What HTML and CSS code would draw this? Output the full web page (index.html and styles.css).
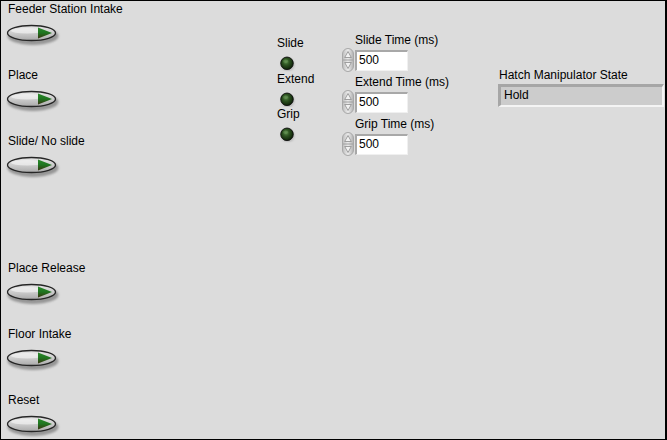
FILE: index.html
```html
<!DOCTYPE html>
<html>
<head>
<meta charset="utf-8">
<link rel="stylesheet" href="styles.css">
</head>
<body>
<svg width="0" height="0" class="defs">
  <defs>
    <linearGradient id="btnFill" x1="0" y1="0" x2="0" y2="1">
      <stop offset="0" stop-color="#e8e8e8"/>
      <stop offset="0.5" stop-color="#cdcdcd"/>
      <stop offset="1" stop-color="#a9a9a9"/>
    </linearGradient>
    <linearGradient id="triFill" x1="0" y1="0" x2="0" y2="1">
      <stop offset="0" stop-color="#2a8a2a"/>
      <stop offset="0.5" stop-color="#1f7420"/>
      <stop offset="1" stop-color="#3a3410"/>
    </linearGradient>
    <linearGradient id="spinFill" x1="0" y1="0" x2="1" y2="0">
      <stop offset="0" stop-color="#bcbcbc"/>
      <stop offset="0.5" stop-color="#ececec"/>
      <stop offset="1" stop-color="#b0b0b0"/>
    </linearGradient>
    <radialGradient id="ledFill" cx="0.42" cy="0.38" r="0.6">
      <stop offset="0" stop-color="#5a8a4a"/>
      <stop offset="0.45" stop-color="#2c5220"/>
      <stop offset="1" stop-color="#10240a"/>
    </radialGradient>
    <filter id="blur" x="-20%" y="-40%" width="140%" height="180%">
      <feGaussianBlur stdDeviation="1.3"/>
    </filter>
    <symbol id="btn" viewBox="0 0 56 24">
      <ellipse cx="27" cy="12" rx="25.5" ry="9" fill="#969696" filter="url(#blur)"/>
      <ellipse cx="25.5" cy="9" rx="24" ry="7.5" fill="url(#btnFill)" stroke="#262626" stroke-width="1.3"/>
      <ellipse cx="21" cy="6.8" rx="16" ry="2.8" fill="#f6f6f6" opacity="0.6"/>
      <polygon points="32,3.5 46,9 32,14.5" fill="url(#triFill)"/>
    </symbol>
    <symbol id="led" viewBox="0 0 18 18">
      <circle cx="10" cy="10" r="7.5" fill="#b4b4b4" filter="url(#blur)"/>
      <circle cx="9" cy="8.5" r="7.3" fill="url(#ledFill)" stroke="#0c0c0c" stroke-width="1"/>
      <ellipse cx="7.5" cy="6" rx="3" ry="2" fill="#7aa86a" opacity="0.35"/>
    </symbol>
    <symbol id="spin" viewBox="0 0 12 24">
      <rect x="0.5" y="0.5" width="11" height="23" rx="5.5" fill="url(#spinFill)" stroke="#a8a8a8"/>
      <line x1="1" y1="12" x2="11" y2="12" stroke="#a0a0a0"/>
      <polygon points="6,3.5 9.3,9.5 2.7,9.5" fill="#f2f2f2" stroke="#8c8c8c" stroke-width="0.8"/>
      <polygon points="6,20.5 9.3,14.5 2.7,14.5" fill="#f2f2f2" stroke="#8c8c8c" stroke-width="0.8"/>
    </symbol>
  </defs>
</svg>
<div class="panel">
  <div class="col-buttons">
    <div class="btn-group">
      <div class="label">Feeder Station Intake</div>
      <svg class="bool-btn"><use href="#btn"/></svg>
    </div>
    <div class="btn-group">
      <div class="label">Place</div>
      <svg class="bool-btn"><use href="#btn"/></svg>
    </div>
    <div class="btn-group">
      <div class="label">Slide/ No slide</div>
      <svg class="bool-btn"><use href="#btn"/></svg>
    </div>
    <div class="btn-group lower">
      <div class="label">Place Release</div>
      <svg class="bool-btn"><use href="#btn"/></svg>
    </div>
    <div class="btn-group">
      <div class="label">Floor Intake</div>
      <svg class="bool-btn"><use href="#btn"/></svg>
    </div>
    <div class="btn-group">
      <div class="label">Reset</div>
      <svg class="bool-btn"><use href="#btn"/></svg>
    </div>
  </div>

  <div class="col-leds">
    <div class="led-group">
      <div class="label">Slide</div>
      <svg class="led"><use href="#led"/></svg>
    </div>
    <div class="led-group">
      <div class="label">Extend</div>
      <svg class="led"><use href="#led"/></svg>
    </div>
    <div class="led-group">
      <div class="label">Grip</div>
      <svg class="led"><use href="#led"/></svg>
    </div>
  </div>

  <div class="col-nums">
    <div class="num-group">
      <div class="label num-label">Slide Time (ms)</div>
      <div class="numeric">
        <svg class="spin"><use href="#spin"/></svg>
        <div class="num-box">500</div>
      </div>
    </div>
    <div class="num-group">
      <div class="label num-label">Extend Time (ms)</div>
      <div class="numeric">
        <svg class="spin"><use href="#spin"/></svg>
        <div class="num-box">500</div>
      </div>
    </div>
    <div class="num-group">
      <div class="label num-label">Grip Time (ms)</div>
      <div class="numeric">
        <svg class="spin"><use href="#spin"/></svg>
        <div class="num-box">500</div>
      </div>
    </div>
  </div>

  <div class="col-state">
    <div class="label">Hatch Manipulator State</div>
    <div class="str-ind">Hold</div>
  </div>
</div>
</body>
</html>
```

FILE: styles.css
```css
* { box-sizing: border-box; }
html, body { margin: 0; padding: 0; }
body {
  width: 667px;
  height: 440px;
  background: #dcdcdc;
  font-family: "Liberation Sans", Arial, sans-serif;
  font-size: 12px;
  color: #000;
  overflow: hidden;
}
.defs { position: absolute; width: 0; height: 0; }
.panel {
  width: 667px;
  height: 440px;
  border: 1px solid #000;
  border-right-width: 2px;
  background: #dcdcdc;
  display: flex;
  align-items: flex-start;
}
.label {
  height: 14px;
  line-height: 14px;
  white-space: nowrap;
}
.col-buttons {
  width: 276px;
  padding-left: 6px;
  padding-top: 1px;
  display: flex;
  flex-direction: column;
}
.btn-group {
  height: 66px;
  display: flex;
  flex-direction: column;
  align-items: flex-start;
}
.btn-group .label { margin-left: 1px; }
.btn-group.lower { margin-top: 61px; }
.bool-btn {
  width: 56px;
  height: 24px;
  margin-top: 8px;
  margin-left: -1px;
}
.col-leds {
  width: 64px;
  padding-top: 35px;
  display: flex;
  flex-direction: column;
}
.led-group {
  height: 35.5px;
  display: flex;
  flex-direction: column;
}
.led {
  width: 18px;
  height: 18px;
  margin-top: 6px;
  margin-left: 1px;
}
.col-nums {
  width: 157px;
  padding-top: 32px;
  display: flex;
  flex-direction: column;
}
.num-group {
  height: 42px;
  display: flex;
  flex-direction: column;
}
.num-label { margin-left: 14px; }
.numeric {
  margin-top: 3px;
  display: flex;
  align-items: center;
  height: 20px;
}
.spin {
  width: 12px;
  height: 24px;
  margin-left: 1px;
}
.num-box {
  width: 53px;
  height: 21px;
  margin-left: 1px;
  background: #fff;
  border-top: 2px solid #a8a8a8;
  border-left: 2px solid #a8a8a8;
  border-right: 1px solid #f0f0f0;
  border-bottom: 1px solid #f0f0f0;
  padding-left: 2px;
  line-height: 17px;
}
.col-state {
  width: 166px;
  padding-top: 67px;
  display: flex;
  flex-direction: column;
}
.col-state .label { margin-left: 1px; }
.str-ind {
  margin-top: 2px;
  width: 166px;
  height: 23px;
  background: #cccccc;
  border-top: 3px solid #a6a6a6;
  border-left: 3px solid #a6a6a6;
  border-right: 2px solid #f4f4f4;
  border-bottom: 2px solid #f4f4f4;
  padding-left: 3px;
  line-height: 17px;
}
```
